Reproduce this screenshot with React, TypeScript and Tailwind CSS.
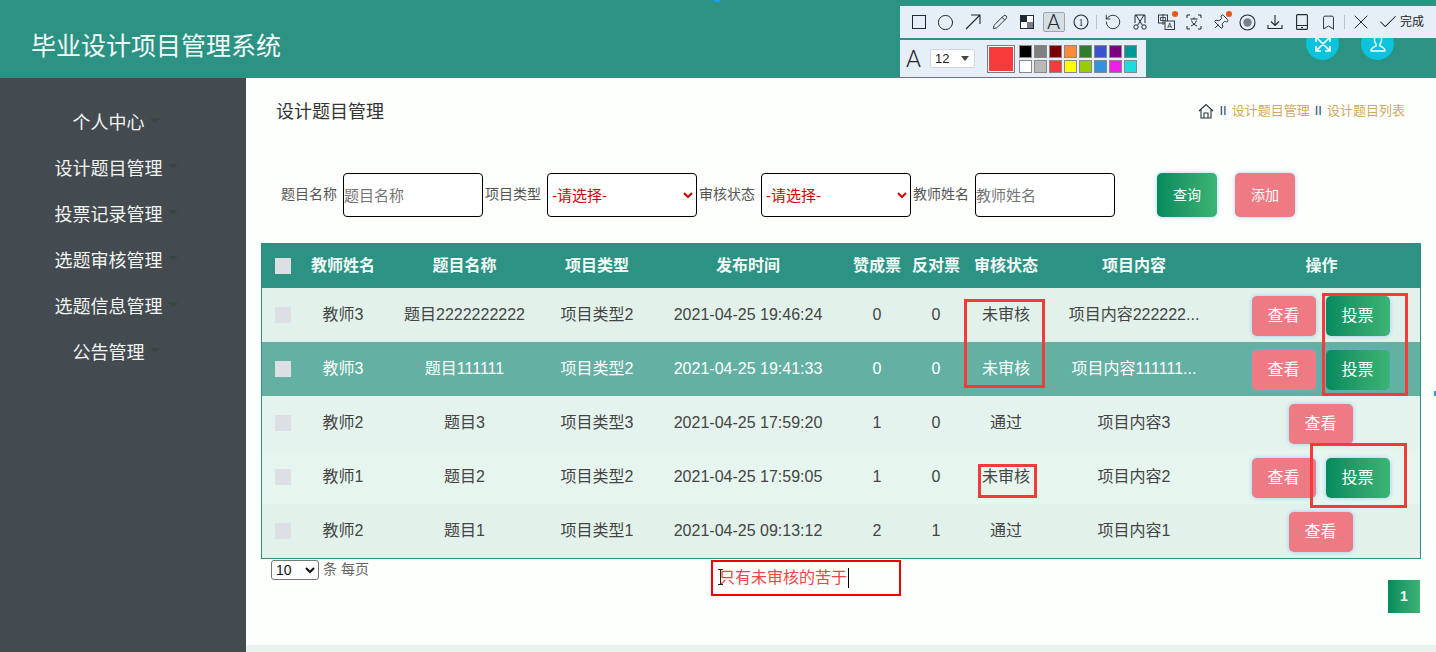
import React from 'react';
import { Bookmark, Check, Circle, Pencil, Pin, RotateCcw, X } from 'lucide-react';

const menus = ['个人中心', '设计题目管理', '投票记录管理', '选题审核管理', '选题信息管理', '公告管理'];

const rows = [
  { teacher: '教师3', title: '题目2222222222', type: '项目类型2', time: '2021-04-25 19:46:24', yes: 0, no: 0, status: '未审核', content: '项目内容222222...', vote: true, bg: 'bg-[#e2f2eb] text-[#444]' },
  { teacher: '教师3', title: '题目111111', type: '项目类型2', time: '2021-04-25 19:41:33', yes: 0, no: 0, status: '未审核', content: '项目内容111111...', vote: true, bg: 'bg-[#62b1a2] text-white' },
  { teacher: '教师2', title: '题目3', type: '项目类型3', time: '2021-04-25 17:59:20', yes: 1, no: 0, status: '通过', content: '项目内容3', vote: false, bg: 'bg-[#e4f3ed] text-[#444]' },
  { teacher: '教师1', title: '题目2', type: '项目类型2', time: '2021-04-25 17:59:05', yes: 1, no: 0, status: '未审核', content: '项目内容2', vote: true, bg: 'bg-[#e6f6ef] text-[#444]' },
  { teacher: '教师2', title: '题目1', type: '项目类型1', time: '2021-04-25 09:13:12', yes: 2, no: 1, status: '通过', content: '项目内容1', vote: false, bg: 'bg-[#e2f2eb] text-[#444]' },
];

const swatches = [
  'bg-[#000000]', 'bg-[#7f7f7f]', 'bg-[#7f0000]', 'bg-[#f98a38]', 'bg-[#2e7d2e]', 'bg-[#3b52cc]', 'bg-[#7f007f]', 'bg-[#009696]',
  'bg-[#ffffff]', 'bg-[#b9b9b9]', 'bg-[#f43a3a]', 'bg-[#ffff00]', 'bg-[#99cc00]', 'bg-[#3392e0]', 'bg-[#f01ce8]', 'bg-[#1cdcdc]',
];

const Dot = () => <span className="absolute -right-[3px] -top-[3px] h-[6px] w-[6px] rounded-full bg-[#e8581c]" />;

const Tool = ({ children, active }: { children: React.ReactNode; active?: boolean }) => (
  <div className="flex h-[32px] w-[27px] items-center justify-center text-[#1f2833]">
    <div className={active ? 'flex h-[20px] w-[22px] items-center justify-center rounded-[2px] border border-[#9aa5ad] bg-[#d5dee2]' : 'relative flex items-center justify-center'}>
      {children}
    </div>
  </div>
);

const Sep = () => <div className="mx-[2px] h-[14px] w-px bg-[#b8c2cb]" />;

const Toolbar = () => (
  <>
    <div className="absolute left-[900px] top-[6px] flex h-[32px] w-[536px] items-center bg-[#e6eef7] pl-[5px]">
      <Tool>
        <svg width="14" height="14" viewBox="0 0 14 14"><rect x="0.5" y="0.5" width="13" height="13" fill="none" stroke="#1f2833" /></svg>
      </Tool>
      <Tool><Circle size={17} strokeWidth={1.4} /></Tool>
      <Tool>
        <svg width="16" height="16" viewBox="0 0 16 16" fill="none" stroke="#1f2833" strokeWidth="1.1">
          <path d="M1 15L15 1M6 1h9v9" />
        </svg>
      </Tool>
      <Tool><Pencil size={16} strokeWidth={1.4} /></Tool>
      <Tool>
        <svg width="14" height="14" viewBox="0 0 14 14">
          <rect x="0.5" y="0.5" width="13" height="13" fill="#fff" stroke="#1f2833" />
          <rect x="1" y="1" width="6" height="6" fill="#1f2833" />
          <rect x="7" y="7" width="6" height="6" fill="#77808a" />
        </svg>
      </Tool>
      <Tool active><span className="text-[21px] leading-none font-['Roboto',sans-serif] font-light">A</span></Tool>
      <Tool>
        <svg width="16" height="16" viewBox="0 0 16 16">
          <circle cx="8" cy="8" r="7" fill="none" stroke="#1f2833" strokeWidth="1.1" />
          <text x="8" y="11.5" textAnchor="middle" fontSize="10" fill="#1f2833" fontFamily="Liberation Serif, serif">1</text>
        </svg>
      </Tool>
      <Sep />
      <Tool><RotateCcw size={18} strokeWidth={1.2} /></Tool>
      <Tool>
        <svg width="16" height="16" viewBox="0 0 16 16" fill="none" stroke="#1f2833" strokeWidth="1">
          <path d="M3 9V1h10v8" />
          <path d="M4 1l6.2 10M12 1L5.8 11" />
          <circle cx="4" cy="13" r="2.2" />
          <circle cx="12" cy="13" r="2.2" />
        </svg>
      </Tool>
      <Tool>
        <svg width="17" height="16" viewBox="0 0 17 16">
          <rect x="0.5" y="1" width="9" height="8" fill="none" stroke="#1f2833" strokeWidth="0.9" />
          <path d="M5 0v11M2.5 3.5h5v3h-5z" fill="none" stroke="#1f2833" strokeWidth="0.8" />
          <rect x="7" y="7" width="9.5" height="8.5" fill="#e6eef7" stroke="#1f2833" strokeWidth="0.9" />
          <text x="11.7" y="14" textAnchor="middle" fontSize="7" fill="#1f2833" fontFamily="Liberation Sans, sans-serif">A</text>
        </svg>
        <Dot />
      </Tool>
      <Tool>
        <svg width="16" height="16" viewBox="0 0 16 16" fill="none" stroke="#1f2833" strokeWidth="1">
          <path d="M1 4V1h3M12 1h3v3M15 12v3h-3M4 15H1v-3" />
          <path d="M4.5 5h7M8 3.5V5M5.5 6.5c1 3 3 4.5 5.5 5.5M10.5 6.5c-1 3-3 4.5-5.5 5.5" />
        </svg>
      </Tool>
      <Tool><Pin size={17} strokeWidth={1.3} className="rotate-45" /><Dot /></Tool>
      <Tool>
        <svg width="17" height="17" viewBox="0 0 17 17">
          <circle cx="8.5" cy="8.5" r="7.5" fill="none" stroke="#1f2833" strokeWidth="1.1" />
          <circle cx="8.5" cy="8.5" r="4.2" fill="#77808a" />
        </svg>
      </Tool>
      <Tool>
        <svg width="16" height="16" viewBox="0 0 16 16" fill="none" stroke="#1f2833" strokeWidth="1.1">
          <path d="M8 1v10M4 7.5L8 11.5l4-4M1 11v3.5h14V11" />
        </svg>
      </Tool>
      <Tool>
        <svg width="12" height="16" viewBox="0 0 12 16" fill="none" stroke="#1f2833" strokeWidth="1.1">
          <rect x="0.6" y="0.6" width="10.8" height="14.8" rx="1" />
          <path d="M1 11.5h10M5 13.5h2" />
        </svg>
      </Tool>
      <Tool><Bookmark size={17} strokeWidth={1.3} /></Tool>
      <Sep />
      <Tool><X size={24} strokeWidth={1} /></Tool>
      <Tool><Check size={22} strokeWidth={1.1} /></Tool>
      <span className="ml-[-1px] text-[12px] text-[#222]">完成</span>
    </div>

    <div className="absolute left-[900px] top-[40px] flex h-[37px] w-[246px] items-center bg-[#e6eef7]">
      <span className="ml-[6px] w-[18px] text-[24px] leading-none font-['Roboto',sans-serif] font-light text-[#1f2833]">A</span>
      <div className="ml-[6px] flex h-[19px] w-[45px] items-center justify-between rounded-[2px] border border-[#cfd6dc] bg-white px-[4px] text-[13px] text-[#222]">
        12
        <span className="mr-[1px] h-0 w-0 border-x-[4px] border-t-[5px] border-x-transparent border-t-[#444]" />
      </div>
      <div className="ml-[12px] flex h-[28px] w-[28px] items-center justify-center border border-[#7d7d7d] bg-white p-px">
        <div className="h-full w-full bg-[#f93a3a]" />
      </div>
      <div className="ml-[4px] grid grid-cols-[repeat(8,13px)] gap-x-[2px] gap-y-[2px]">
        {swatches.map(c => <div key={c} className={`h-[13px] w-[13px] border border-[#8a8a8a] ${c}`} />)}
      </div>
    </div>
  </>
);

// 截图上手工画的红框
const Marks = () => (
  <>
    <div className="absolute left-[964px] top-[299px] h-[89px] w-[81px] border-[3px] border-[#f43a3a]" />
    <div className="absolute left-[1322px] top-[293px] h-[103px] w-[86px] border-[3px] border-[#f43a3a]" />
    <div className="absolute left-[978px] top-[464px] h-[34px] w-[59px] border-[3px] border-[#f43a3a]" />
    <div className="absolute left-[1310px] top-[443px] h-[65px] w-[97px] border-[3px] border-[#f43a3a]" />
    <div className="absolute left-[711px] top-[560px] flex h-[36px] w-[190px] items-center border-2 border-[#f00000] pl-[6px]">
      <span className="border-r border-black pr-px text-[16px] leading-[20px] text-[#f04545]">只有未审核的苦于</span>
    </div>
    <svg width="7" height="16" viewBox="0 0 7 16" fill="none" stroke="#222" strokeWidth="1" className="absolute left-[717px] top-[569px]">
      <path d="M1 .5h5M3.5.5v15M1 15.5h5" />
    </svg>
    <div className="absolute left-[714px] top-0 h-[2px] w-[6px] bg-[#1a9cf0]" />
    <div className="absolute left-[1434px] top-[391px] h-[5px] w-[2px] bg-[#1a9cf0]" />
  </>
);

const PinkBtn = ({ children, size }: { children: React.ReactNode; size?: string }) => (
  <button className={`rounded-[5px] bg-[#ee7a84] text-white shadow-[0_0_4px_rgba(110,170,255,0.6)] ${size ?? 'h-[40px] w-[64px] text-[16px]'}`}>{children}</button>
);

const GreenBtn = ({ children, size }: { children: React.ReactNode; size?: string }) => (
  <button className={`rounded-[5px] bg-linear-to-r from-[#038a5e] to-[#3cb474] text-white shadow-[0_0_4px_rgba(110,170,255,0.6)] ${size ?? 'h-[40px] w-[64px] text-[16px]'}`}>{children}</button>
);

const Check16 = () => <div className="mx-auto h-[16px] w-[16px] bg-[#dcdfe3]" />;

const App: React.FC = () => {
  return (
    <div className="relative h-[652px] w-[1436px] overflow-hidden bg-[#fdfffc] font-['Liberation_Sans','Noto_Sans_CJK_SC',sans-serif]">
      <header className="flex h-[78px] items-center justify-between bg-[#2c9384] pl-[31px] pr-[42px] pt-[9px]">
        <h1 className="text-[25px] leading-none text-[#f4fbf8] mt-[5px]">毕业设计项目管理系统</h1>
        <div className="flex gap-[22px]">
          <div className="flex h-[33px] w-[33px] items-center justify-center rounded-full bg-[#0bc3dc]">
            <svg width="20" height="20" viewBox="0 0 20 20" fill="none" stroke="#fff" strokeWidth="1.6">
              <path d="M3 3l14 14M17 3L3 17M3 8V3h5M12 3h5v5M17 12v5h-5M8 17H3v-5" />
            </svg>
          </div>
          <div className="flex h-[33px] w-[33px] items-center justify-center rounded-full bg-[#0bc3dc]">
            <svg width="20" height="20" viewBox="0 0 20 20" fill="none" stroke="#fff" strokeWidth="1.5">
              <path d="M10 2c-2.4 0-3.6 1.8-3.6 4 0 1.8.7 3.1 1.6 4v2c-2 .9-4 1.7-4.8 3.5V17h13.6v-1.5c-.8-1.8-2.8-2.6-4.8-3.5v-2c.9-.9 1.6-2.2 1.6-4 0-2.2-1.2-4-3.6-4z" />
            </svg>
          </div>
        </div>
      </header>

      <div className="flex h-[574px]">
        <aside className="w-[246px] shrink-0 bg-[#434a50] pt-[22px] pr-[14px]">
          {menus.map(m => (
            <div key={m} className="flex h-[46px] items-center justify-center text-[18px] text-[#f2f5f2]">
              {m}
              <span className="ml-[5px] mb-[5px] h-0 w-0 border-x-[5px] border-t-[5px] border-x-transparent border-t-[#39453f]" />
            </div>
          ))}
        </aside>

        <main className="flex min-w-0 flex-1 flex-col">
          <div className="flex h-[47px] items-center justify-between pl-[30px] pr-[31px] pt-[21px]">
            <h2 className="text-[18px] leading-[26px] text-[#333]">设计题目管理</h2>
            <div className="mb-[2px] flex items-center text-[13px] text-[#d4a95c]">
              <svg width="16" height="16" viewBox="0 0 16 16" fill="none" stroke="#26343f" strokeWidth="1.1" className="mr-[6px]">
                <path d="M1 8l7-6.5L15 8M3 6.5V15h10V6.5M6 15v-5h4v5" />
              </svg>
              <span className="mr-[5px] text-[#1d4f73]">II</span>
              设计题目管理
              <span className="mx-[5px] text-[#1d4f73]">II</span>
              设计题目列表
            </div>
          </div>

          <form className="ml-[35px] mt-[48px] flex h-[44px] items-center text-[14px] text-[#555]">
            <span className="mr-[6px] mb-[2px]">题目名称</span>
            <input placeholder="题目名称" className="h-[44px] w-[140px] rounded-[4px] border border-black bg-white text-[15px] placeholder:text-[#757575]" />
            <span className="ml-[2px] mr-[6px] mb-[2px]">项目类型</span>
            <select className="h-[44px] w-[150px] rounded-[4px] border border-black bg-white text-[15px] text-[#d40000]">
              <option>-请选择-</option>
            </select>
            <span className="ml-[2px] mr-[6px] mb-[2px]">审核状态</span>
            <select className="h-[44px] w-[150px] rounded-[4px] border border-black bg-white text-[15px] text-[#d40000]">
              <option>-请选择-</option>
            </select>
            <span className="ml-[2px] mr-[6px] mb-[2px]">教师姓名</span>
            <input placeholder="教师姓名" className="h-[44px] w-[140px] rounded-[4px] border border-black bg-white text-[15px] placeholder:text-[#757575]" />
            <div className="ml-[42px]"><GreenBtn size="h-[44px] w-[60px] text-[14px] block">查询</GreenBtn></div>
            <div className="ml-[18px]"><PinkBtn size="h-[44px] w-[60px] text-[14px] block">添加</PinkBtn></div>
          </form>

          <div className="ml-[15px] mt-[26px] w-[1160px] border border-[#2c9384]">
            <table className="w-full table-fixed border-collapse text-center text-[16px]">
              <colgroup>
                <col className="w-[42px]" />
                <col className="w-[78px]" />
                <col className="w-[165px]" />
                <col className="w-[100px]" />
                <col className="w-[202px]" />
                <col className="w-[56px]" />
                <col className="w-[62px]" />
                <col className="w-[78px]" />
                <col className="w-[178px]" />
                <col className="w-[197px]" />
              </colgroup>
              <thead>
                <tr className="h-[44px] bg-[#2c9384] font-bold text-[#f2f9f6]">
                  <th><Check16 /></th>
                  <th>教师姓名</th>
                  <th>题目名称</th>
                  <th>项目类型</th>
                  <th>发布时间</th>
                  <th>赞成票</th>
                  <th>反对票</th>
                  <th>审核状态</th>
                  <th>项目内容</th>
                  <th>操作</th>
                </tr>
              </thead>
              <tbody>
                {rows.map((r, i) => (
                  <tr key={i} className={`h-[54px] ${r.bg}`}>
                    <td><Check16 /></td>
                    <td>{r.teacher}</td>
                    <td>{r.title}</td>
                    <td>{r.type}</td>
                    <td>{r.time}</td>
                    <td>{r.yes}</td>
                    <td>{r.no}</td>
                    <td>{r.status}</td>
                    <td>{r.content}</td>
                    <td>
                      <div className="flex justify-center gap-[10px] pr-[2px] pt-[2px]">
                        <PinkBtn>查看</PinkBtn>
                        {r.vote && <GreenBtn>投票</GreenBtn>}
                      </div>
                    </td>
                  </tr>
                ))}
              </tbody>
            </table>
          </div>

          <div className="flex items-start justify-between pl-[25px] pr-[16px]">
            <div className="flex items-center text-[14px] text-[#666]">
              <select className="h-[20px] w-[48px] rounded-[3px] border border-[#767676] bg-white text-[14px] text-[#111]">
                <option>10</option>
              </select>
              <span className="ml-[4px]">条 每页</span>
            </div>
            <div className="mt-[21px] flex h-[33px] w-[32px] items-center justify-center bg-linear-to-r from-[#038a5e] to-[#3cb474] text-[14px] font-bold text-[#f2f9f6]">1</div>
          </div>

          <div className="mt-auto h-[7px] bg-[#e8f3ee]" />
        </main>
      </div>

      <Toolbar />
      <Marks />
    </div>
  );
};

export default App;
